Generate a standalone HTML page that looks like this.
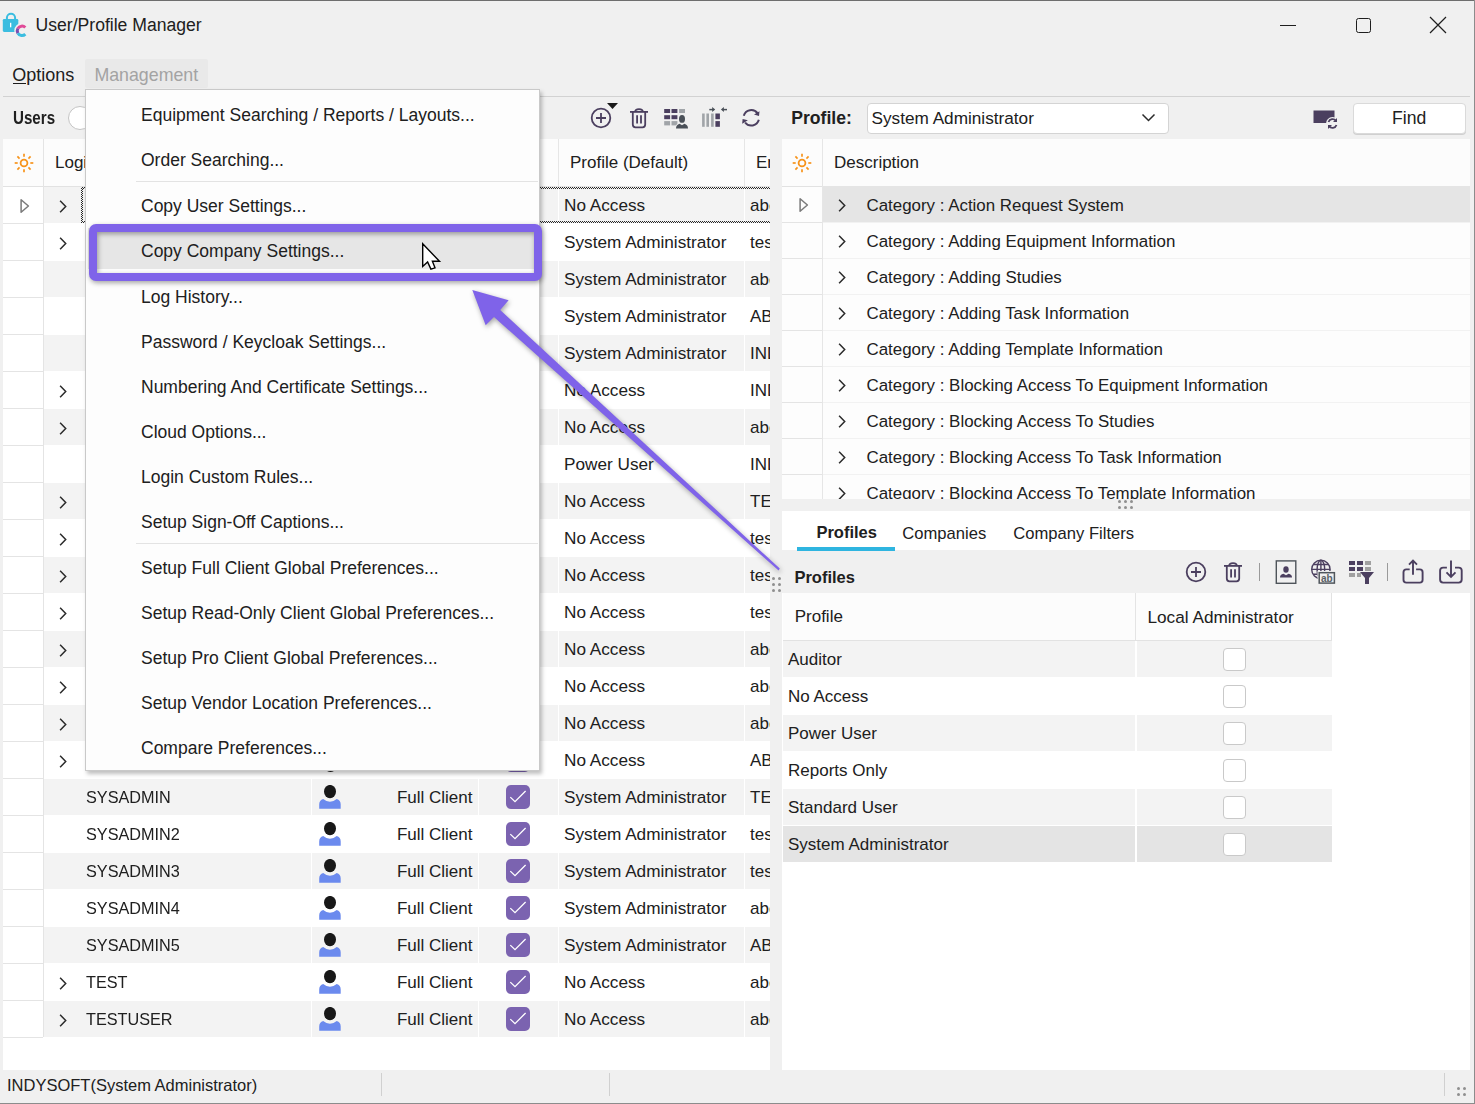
<!DOCTYPE html><html><head><meta charset="utf-8"><style>
*{box-sizing:border-box;margin:0;padding:0}
html,body{width:1475px;height:1104px;overflow:hidden;background:#f0f0f0;font-family:"Liberation Sans",sans-serif;color:#202020}
.a{position:absolute}
.t{position:absolute;white-space:nowrap}
.b{font-weight:bold}
</style></head><body><div class="a" style="left:0px;top:0px;width:1475px;height:1px;background:#6e6e6e"></div><div class="a" style="left:1474px;top:0px;width:1px;height:1104px;background:#8c8c8c"></div><div class="a" style="left:0px;top:1103px;width:1475px;height:1px;background:#8c8c8c"></div><svg class="a" style="left:0px;top:0px;" width="30" height="40" viewBox="0 0 30 40"><path d="M6.9 19.5 V17.8 A4.1 4.1 0 0 1 15.1 17.8 V19.5" fill="none" stroke="#3bbde0" stroke-width="2"/><rect x="2.8" y="19" width="15.5" height="12.9" rx="1.3" fill="#3bbde0"/><rect x="10" y="22.8" width="1.3" height="4.5" fill="#fff"/><path d="M25.3 27.5 A4.7 4.7 0 1 0 25.3 34.1" fill="none" stroke="#f0f0f0" stroke-width="6"/><path d="M25.3 27.5 A4.7 4.7 0 0 0 17.9 28.45" fill="none" stroke="#e04a98" stroke-width="3"/><path d="M17.9 28.45 A4.7 4.7 0 0 0 17.9 33.15" fill="none" stroke="#7a4db0" stroke-width="3"/><path d="M17.9 33.15 A4.7 4.7 0 0 0 25.3 34.1" fill="none" stroke="#3bbde0" stroke-width="3"/></svg><div class="t" style="left:35.5px;top:9.80px;font-size:17.60px;line-height:30px;">User/Profile Manager</div><div class="a" style="left:1280px;top:25px;width:16px;height:1.2px;background:#1e1e1e"></div><div class="a" style="left:1355.5px;top:17.5px;width:15px;height:15px;border:1.3px solid #1e1e1e;border-radius:2.5px"></div><svg class="a" style="left:1429px;top:16px;" width="18" height="18" viewBox="0 0 18 18"><path d="M1 1 L17 17 M17 1 L1 17" stroke="#1e1e1e" stroke-width="1.2"/></svg><div class="a" style="left:85px;top:59px;width:123px;height:29px;background:#e9e9e9;border-radius:2px"></div><div class="t" style="left:12.2px;top:60.36px;font-size:18.00px;line-height:30px;">Options</div><div class="a" style="left:12.5px;top:83.3px;width:13.5px;height:1.2px;background:#1c1c1c"></div><div class="t" style="left:94.4px;top:60.43px;font-size:17.80px;line-height:30px;color:#a3a3a3">Management</div><div class="a" style="left:3px;top:96px;width:1467px;height:1px;background:#d2d2d2"></div><div class="t" style="left:7.0px;top:1070.28px;font-size:16.50px;line-height:30px;">INDYSOFT(System Administrator)</div><div class="a" style="left:381px;top:1073px;width:1px;height:23px;background:#d0d0d0"></div><div class="a" style="left:609px;top:1073px;width:1px;height:23px;background:#d0d0d0"></div><div class="a" style="left:1444px;top:1073px;width:1px;height:23px;background:#d0d0d0"></div><div class="a" style="left:1457.0px;top:1087.0px;width:3px;height:3px;border-radius:50%;background:#8f8f8f"></div><div class="a" style="left:1457.0px;top:1093.0px;width:3px;height:3px;border-radius:50%;background:#8f8f8f"></div><div class="a" style="left:1463.0px;top:1087.0px;width:3px;height:3px;border-radius:50%;background:#8f8f8f"></div><div class="a" style="left:1463.0px;top:1093.0px;width:3px;height:3px;border-radius:50%;background:#8f8f8f"></div><div class="t" style="left:12.5px;top:102.80px;font-size:17.60px;line-height:30px;font-weight:bold;transform:scaleX(0.86);transform-origin:0 0">Users</div><div class="a" style="left:68px;top:106px;width:24px;height:24px;border-radius:50%;background:#fff;border:1.3px solid #c4c4c4"></div><svg class="a" style="left:589px;top:101px;" width="32" height="30" viewBox="0 0 32 30"><circle cx="12" cy="17" r="9.3" fill="none" stroke="#4b3f5f" stroke-width="1.8"/><path d="M12 12 V22 M7 17 H17" stroke="#4b3f5f" stroke-width="1.8"/><path d="M18 2 H29 L23.5 8 Z" fill="#1a1a1a"/></svg><svg class="a" style="left:629px;top:107px;" width="21" height="22" viewBox="0 0 21 22"><path d="M1 4.9 H19" stroke="#4b3f5f" stroke-width="1.8"/><path d="M6.2 4.9 Q6.2 2.2 10 2.2 Q13.8 2.2 13.8 4.9" fill="none" stroke="#4b3f5f" stroke-width="1.8"/><path d="M3.8 5 V17.6 Q3.8 20.3 6.5 20.3 H13.5 Q16.2 20.3 16.2 17.6 V5" fill="none" stroke="#4b3f5f" stroke-width="1.8"/><path d="M8.1 8.2 V16.5 M12 8.2 V16.5" stroke="#4b3f5f" stroke-width="1.8"/></svg><svg class="a" style="left:663px;top:107px;" width="26" height="23" viewBox="0 0 26 23"><rect x="1.2" y="2" width="5.9" height="4" fill="#4b3f5f"/><rect x="8.5" y="2" width="5.9" height="4" fill="#4b3f5f"/><rect x="16.1" y="2" width="5.9" height="4" fill="#a0a4a8"/><rect x="1.2" y="8.2" width="5.9" height="4" fill="#4b3f5f"/><rect x="8.5" y="8.2" width="5.9" height="4" fill="#4b3f5f"/><rect x="1.2" y="14.1" width="5.9" height="4.3" fill="#a0a4a8"/><rect x="8.5" y="14.1" width="5.9" height="4.3" fill="#a0a4a8"/><g stroke="#f0f0f0" stroke-width="1.6"><ellipse cx="19" cy="11.9" rx="3" ry="3.9" fill="#4a5058"/><path d="M13 21.5 Q13 17.6 16.6 16.7 L19 18.3 L21.4 16.7 Q25 17.6 25 21.5 Z" fill="#4a5058"/></g><ellipse cx="19" cy="11.9" rx="3" ry="3.9" fill="#4a5058"/><path d="M13 21.5 Q13 17.6 16.6 16.7 L19 18.3 L21.4 16.7 Q25 17.6 25 21.5 Z" fill="#4a5058"/></svg><svg class="a" style="left:701px;top:106px;" width="27" height="23" viewBox="0 0 27 23"><rect x="1.1" y="7.5" width="2.6" height="13.3" fill="#a0a4a8"/><rect x="5.4" y="7.5" width="2.6" height="13.3" fill="#a0a4a8"/><rect x="10.1" y="7.5" width="2.6" height="13.3" fill="#a0a4a8"/><rect x="14.4" y="7.5" width="4.5" height="5.7" fill="#4b3f5f"/><rect x="14.4" y="15.1" width="4.5" height="5.7" fill="#4b3f5f"/><path d="M8.3 3.6 H12.6" stroke="#4a5058" stroke-width="1.5"/><path d="M11.2 1.1 L14.2 3.6 L11.2 6.1 Z" fill="#4a5058"/><path d="M21.5 3.6 H26" stroke="#4a5058" stroke-width="1.5"/><path d="M22.9 1.1 L19.9 3.6 L22.9 6.1 Z" fill="#4a5058"/></svg><svg class="a" style="left:741px;top:107px;" width="21" height="21" viewBox="0 0 21 21"><path d="M2.77 8.78 A7.8 7.8 0 0 1 16.6 6.3" fill="none" stroke="#4b3f5f" stroke-width="2"/><path d="M18.5 4.2 L18 8.9 L13 7.4 Z" fill="#4b3f5f"/><path d="M17.83 12.82 A7.8 7.8 0 0 1 4.1 15.5" fill="none" stroke="#4b3f5f" stroke-width="2"/><path d="M1.2 16.7 L1.6 12 L6.9 13.3 Z" fill="#4b3f5f"/></svg><div class="t" style="left:791.2px;top:102.80px;font-size:17.60px;line-height:30px;font-weight:bold">Profile:</div><div class="a" style="left:867px;top:102.5px;width:302px;height:31px;background:#fff;border:1px solid #d4d4d4;border-radius:4px"></div><div class="t" style="left:871.5px;top:103.04px;font-size:17.20px;line-height:30px;">System Administrator</div><svg class="a" style="left:1141px;top:113px;" width="15" height="10" viewBox="0 0 15 10"><path d="M1.5 1.5 L7.5 7.5 L13.5 1.5" fill="none" stroke="#2a2a2a" stroke-width="1.5"/></svg><svg class="a" style="left:1313px;top:110px;" width="27" height="20" viewBox="0 0 27 20"><rect x="0.5" y="0.5" width="21" height="12.5" fill="#4b3f5f"/><circle cx="19.5" cy="13.5" r="6.5" fill="#f0f0f0"/><path d="M15.5 12 A4.2 4.2 0 0 1 23 11" fill="none" stroke="#4b3f5f" stroke-width="1.8"/><path d="M24 8 V12 H20 Z" fill="#4b3f5f"/><path d="M23.5 15 A4.2 4.2 0 0 1 16 16" fill="none" stroke="#4b3f5f" stroke-width="1.8"/><path d="M15 19 V15 H19 Z" fill="#4b3f5f"/></svg><div class="a" style="left:1352.5px;top:102.5px;width:113px;height:31px;background:#fff;border:1px solid #dadada;border-radius:4px;box-shadow:0 1px 0 #d0d0d0"></div><div class="t" style="left:1392.0px;top:103.40px;font-size:17.60px;line-height:30px;">Find</div><div class="a" style="left:3px;top:139px;width:767px;height:931px;background:#fff"></div><div class="a" style="left:3px;top:139px;width:767px;height:47px;background:#fcfcfc"></div><div class="a" style="left:3px;top:186px;width:767px;height:1px;background:#e2e2e2"></div><div class="a" style="left:43px;top:139px;width:1px;height:47px;background:#e6e6e6"></div><div class="a" style="left:558px;top:139px;width:1px;height:47px;background:#e6e6e6"></div><div class="a" style="left:744px;top:139px;width:1px;height:47px;background:#e6e6e6"></div><div class="a" style="left:311px;top:139px;width:1px;height:47px;background:#e6e6e6"></div><div class="a" style="left:478px;top:139px;width:1px;height:47px;background:#e6e6e6"></div><svg class="a" style="left:13.7px;top:152.6px;" width="20" height="20" viewBox="0 0 20 20"><g stroke="#f7931a" stroke-width="1.7"><line x1="16.30" y1="10.00" x2="19.30" y2="10.00"/><line x1="14.45" y1="14.45" x2="16.58" y2="16.58"/><line x1="10.00" y1="16.30" x2="10.00" y2="19.30"/><line x1="5.55" y1="14.45" x2="3.42" y2="16.58"/><line x1="3.70" y1="10.00" x2="0.70" y2="10.00"/><line x1="5.55" y1="5.55" x2="3.42" y2="3.42"/><line x1="10.00" y1="3.70" x2="10.00" y2="0.70"/><line x1="14.45" y1="5.55" x2="16.58" y2="3.42"/></g><circle cx="10" cy="10" r="3.4" fill="none" stroke="#f7931a" stroke-width="1.8"/></svg><div class="t" style="left:55.0px;top:148.11px;font-size:17.00px;line-height:30px;">Login</div><div class="t" style="left:570.0px;top:148.11px;font-size:17.00px;line-height:30px;">Profile (Default)</div><div class="a" style="left:744px;top:139px;width:26px;height:47px;overflow:hidden"><div class="t" style="left:12px;top:9.11px;font-size:17px;line-height:30px">Email</div></div><div class="a" style="left:43px;top:187px;width:727px;height:36px;background:#f3f3f3"></div><div class="a" style="left:311px;top:187px;width:1px;height:36px;background:#fff"></div><div class="a" style="left:478px;top:187px;width:1px;height:36px;background:#fff"></div><div class="a" style="left:558px;top:187px;width:1px;height:36px;background:#fff"></div><div class="a" style="left:744px;top:187px;width:1px;height:36px;background:#fff"></div><div class="a" style="left:3px;top:223px;width:40px;height:1px;background:#e4e4e4"></div><svg class="a" style="left:57.5px;top:199px;" width="11" height="15" viewBox="0 0 11 15"><path d="M2.1 1.8 L7.7 7.55 L2.1 13.3" fill="none" stroke="#2b2b2b" stroke-width="1.5"/></svg><div class="t" style="left:86.0px;top:190.81px;font-size:17.00px;line-height:30px;transform:scaleX(0.955);transform-origin:0 0">ADMIN1</div><svg class="a" style="left:319px;top:193px;" width="24" height="26" viewBox="0 0 24 26"><ellipse cx="11" cy="6.6" rx="6" ry="6.7" fill="#181818"/><path d="M0.2 23.8 V19.5 Q0.2 15 4.2 13.9 Q11 19.5 17.7 13.9 Q21.7 15 21.7 19.5 V23.8 Z" fill="#6b8aee"/></svg><div class="t" style="left:472.5px;top:190.81px;font-size:17.00px;line-height:30px;transform:translateX(-100%)">Full Client</div><div class="a" style="left:506px;top:193px;width:24px;height:24px;border-radius:5px;background:#7b63b0"></div><svg class="a" style="left:506px;top:193px;" width="24" height="24" viewBox="0 0 24 24"><path d="M4.3 12.1 L9 16.6 L19.6 6" fill="none" stroke="#fff" stroke-width="1.3"/></svg><div class="t" style="left:564.0px;top:190.24px;font-size:17.20px;line-height:30px;">No Access</div><div class="a" style="left:744px;top:186px;width:26px;height:37px;overflow:hidden"><div class="t" style="left:6px;top:4.81px;font-size:17px;line-height:30px">abc@indysoft.com</div></div><div class="a" style="left:3px;top:260px;width:40px;height:1px;background:#e4e4e4"></div><svg class="a" style="left:57.5px;top:236px;" width="11" height="15" viewBox="0 0 11 15"><path d="M2.1 1.8 L7.7 7.55 L2.1 13.3" fill="none" stroke="#2b2b2b" stroke-width="1.5"/></svg><div class="t" style="left:86.0px;top:227.81px;font-size:17.00px;line-height:30px;transform:scaleX(0.955);transform-origin:0 0">ADMIN2</div><svg class="a" style="left:319px;top:230px;" width="24" height="26" viewBox="0 0 24 26"><ellipse cx="11" cy="6.6" rx="6" ry="6.7" fill="#181818"/><path d="M0.2 23.8 V19.5 Q0.2 15 4.2 13.9 Q11 19.5 17.7 13.9 Q21.7 15 21.7 19.5 V23.8 Z" fill="#6b8aee"/></svg><div class="t" style="left:472.5px;top:227.81px;font-size:17.00px;line-height:30px;transform:translateX(-100%)">Full Client</div><div class="a" style="left:506px;top:230px;width:24px;height:24px;border-radius:5px;background:#7b63b0"></div><svg class="a" style="left:506px;top:230px;" width="24" height="24" viewBox="0 0 24 24"><path d="M4.3 12.1 L9 16.6 L19.6 6" fill="none" stroke="#fff" stroke-width="1.3"/></svg><div class="t" style="left:564.0px;top:227.24px;font-size:17.20px;line-height:30px;">System Administrator</div><div class="a" style="left:744px;top:223px;width:26px;height:37px;overflow:hidden"><div class="t" style="left:6px;top:4.81px;font-size:17px;line-height:30px">test@indysoft.com</div></div><div class="a" style="left:43px;top:261px;width:727px;height:36px;background:#f3f3f3"></div><div class="a" style="left:311px;top:261px;width:1px;height:36px;background:#fff"></div><div class="a" style="left:478px;top:261px;width:1px;height:36px;background:#fff"></div><div class="a" style="left:558px;top:261px;width:1px;height:36px;background:#fff"></div><div class="a" style="left:744px;top:261px;width:1px;height:36px;background:#fff"></div><div class="a" style="left:3px;top:297px;width:40px;height:1px;background:#e4e4e4"></div><div class="t" style="left:86.0px;top:264.81px;font-size:17.00px;line-height:30px;transform:scaleX(0.955);transform-origin:0 0">ADMIN3</div><svg class="a" style="left:319px;top:267px;" width="24" height="26" viewBox="0 0 24 26"><ellipse cx="11" cy="6.6" rx="6" ry="6.7" fill="#181818"/><path d="M0.2 23.8 V19.5 Q0.2 15 4.2 13.9 Q11 19.5 17.7 13.9 Q21.7 15 21.7 19.5 V23.8 Z" fill="#6b8aee"/></svg><div class="t" style="left:472.5px;top:264.81px;font-size:17.00px;line-height:30px;transform:translateX(-100%)">Full Client</div><div class="a" style="left:506px;top:267px;width:24px;height:24px;border-radius:5px;background:#7b63b0"></div><svg class="a" style="left:506px;top:267px;" width="24" height="24" viewBox="0 0 24 24"><path d="M4.3 12.1 L9 16.6 L19.6 6" fill="none" stroke="#fff" stroke-width="1.3"/></svg><div class="t" style="left:564.0px;top:264.24px;font-size:17.20px;line-height:30px;">System Administrator</div><div class="a" style="left:744px;top:260px;width:26px;height:37px;overflow:hidden"><div class="t" style="left:6px;top:4.81px;font-size:17px;line-height:30px">abc@indysoft.com</div></div><div class="a" style="left:3px;top:334px;width:40px;height:1px;background:#e4e4e4"></div><div class="t" style="left:86.0px;top:301.81px;font-size:17.00px;line-height:30px;transform:scaleX(0.955);transform-origin:0 0">ADMIN4</div><svg class="a" style="left:319px;top:304px;" width="24" height="26" viewBox="0 0 24 26"><ellipse cx="11" cy="6.6" rx="6" ry="6.7" fill="#181818"/><path d="M0.2 23.8 V19.5 Q0.2 15 4.2 13.9 Q11 19.5 17.7 13.9 Q21.7 15 21.7 19.5 V23.8 Z" fill="#6b8aee"/></svg><div class="t" style="left:472.5px;top:301.81px;font-size:17.00px;line-height:30px;transform:translateX(-100%)">Full Client</div><div class="a" style="left:506px;top:304px;width:24px;height:24px;border-radius:5px;background:#7b63b0"></div><svg class="a" style="left:506px;top:304px;" width="24" height="24" viewBox="0 0 24 24"><path d="M4.3 12.1 L9 16.6 L19.6 6" fill="none" stroke="#fff" stroke-width="1.3"/></svg><div class="t" style="left:564.0px;top:301.24px;font-size:17.20px;line-height:30px;">System Administrator</div><div class="a" style="left:744px;top:297px;width:26px;height:37px;overflow:hidden"><div class="t" style="left:6px;top:4.81px;font-size:17px;line-height:30px">ABC@indysoft.com</div></div><div class="a" style="left:43px;top:335px;width:727px;height:36px;background:#f3f3f3"></div><div class="a" style="left:311px;top:335px;width:1px;height:36px;background:#fff"></div><div class="a" style="left:478px;top:335px;width:1px;height:36px;background:#fff"></div><div class="a" style="left:558px;top:335px;width:1px;height:36px;background:#fff"></div><div class="a" style="left:744px;top:335px;width:1px;height:36px;background:#fff"></div><div class="a" style="left:3px;top:371px;width:40px;height:1px;background:#e4e4e4"></div><div class="t" style="left:86.0px;top:338.81px;font-size:17.00px;line-height:30px;transform:scaleX(0.955);transform-origin:0 0">ADMIN5</div><svg class="a" style="left:319px;top:341px;" width="24" height="26" viewBox="0 0 24 26"><ellipse cx="11" cy="6.6" rx="6" ry="6.7" fill="#181818"/><path d="M0.2 23.8 V19.5 Q0.2 15 4.2 13.9 Q11 19.5 17.7 13.9 Q21.7 15 21.7 19.5 V23.8 Z" fill="#6b8aee"/></svg><div class="t" style="left:472.5px;top:338.81px;font-size:17.00px;line-height:30px;transform:translateX(-100%)">Full Client</div><div class="a" style="left:506px;top:341px;width:24px;height:24px;border-radius:5px;background:#7b63b0"></div><svg class="a" style="left:506px;top:341px;" width="24" height="24" viewBox="0 0 24 24"><path d="M4.3 12.1 L9 16.6 L19.6 6" fill="none" stroke="#fff" stroke-width="1.3"/></svg><div class="t" style="left:564.0px;top:338.24px;font-size:17.20px;line-height:30px;">System Administrator</div><div class="a" style="left:744px;top:334px;width:26px;height:37px;overflow:hidden"><div class="t" style="left:6px;top:4.81px;font-size:17px;line-height:30px">INDY@indysoft.com</div></div><div class="a" style="left:3px;top:408px;width:40px;height:1px;background:#e4e4e4"></div><svg class="a" style="left:57.5px;top:384px;" width="11" height="15" viewBox="0 0 11 15"><path d="M2.1 1.8 L7.7 7.55 L2.1 13.3" fill="none" stroke="#2b2b2b" stroke-width="1.5"/></svg><div class="t" style="left:86.0px;top:375.81px;font-size:17.00px;line-height:30px;transform:scaleX(0.955);transform-origin:0 0">USER1</div><svg class="a" style="left:319px;top:378px;" width="24" height="26" viewBox="0 0 24 26"><ellipse cx="11" cy="6.6" rx="6" ry="6.7" fill="#181818"/><path d="M0.2 23.8 V19.5 Q0.2 15 4.2 13.9 Q11 19.5 17.7 13.9 Q21.7 15 21.7 19.5 V23.8 Z" fill="#6b8aee"/></svg><div class="t" style="left:472.5px;top:375.81px;font-size:17.00px;line-height:30px;transform:translateX(-100%)">Full Client</div><div class="a" style="left:506px;top:378px;width:24px;height:24px;border-radius:5px;background:#7b63b0"></div><svg class="a" style="left:506px;top:378px;" width="24" height="24" viewBox="0 0 24 24"><path d="M4.3 12.1 L9 16.6 L19.6 6" fill="none" stroke="#fff" stroke-width="1.3"/></svg><div class="t" style="left:564.0px;top:375.24px;font-size:17.20px;line-height:30px;">No Access</div><div class="a" style="left:744px;top:371px;width:26px;height:37px;overflow:hidden"><div class="t" style="left:6px;top:4.81px;font-size:17px;line-height:30px">INDY@indysoft.com</div></div><div class="a" style="left:43px;top:409px;width:727px;height:36px;background:#f3f3f3"></div><div class="a" style="left:311px;top:409px;width:1px;height:36px;background:#fff"></div><div class="a" style="left:478px;top:409px;width:1px;height:36px;background:#fff"></div><div class="a" style="left:558px;top:409px;width:1px;height:36px;background:#fff"></div><div class="a" style="left:744px;top:409px;width:1px;height:36px;background:#fff"></div><div class="a" style="left:3px;top:445px;width:40px;height:1px;background:#e4e4e4"></div><svg class="a" style="left:57.5px;top:421px;" width="11" height="15" viewBox="0 0 11 15"><path d="M2.1 1.8 L7.7 7.55 L2.1 13.3" fill="none" stroke="#2b2b2b" stroke-width="1.5"/></svg><div class="t" style="left:86.0px;top:412.81px;font-size:17.00px;line-height:30px;transform:scaleX(0.955);transform-origin:0 0">USER2</div><svg class="a" style="left:319px;top:415px;" width="24" height="26" viewBox="0 0 24 26"><ellipse cx="11" cy="6.6" rx="6" ry="6.7" fill="#181818"/><path d="M0.2 23.8 V19.5 Q0.2 15 4.2 13.9 Q11 19.5 17.7 13.9 Q21.7 15 21.7 19.5 V23.8 Z" fill="#6b8aee"/></svg><div class="t" style="left:472.5px;top:412.81px;font-size:17.00px;line-height:30px;transform:translateX(-100%)">Full Client</div><div class="a" style="left:506px;top:415px;width:24px;height:24px;border-radius:5px;background:#7b63b0"></div><svg class="a" style="left:506px;top:415px;" width="24" height="24" viewBox="0 0 24 24"><path d="M4.3 12.1 L9 16.6 L19.6 6" fill="none" stroke="#fff" stroke-width="1.3"/></svg><div class="t" style="left:564.0px;top:412.24px;font-size:17.20px;line-height:30px;">No Access</div><div class="a" style="left:744px;top:408px;width:26px;height:37px;overflow:hidden"><div class="t" style="left:6px;top:4.81px;font-size:17px;line-height:30px">abc@indysoft.com</div></div><div class="a" style="left:3px;top:482px;width:40px;height:1px;background:#e4e4e4"></div><div class="t" style="left:86.0px;top:449.81px;font-size:17.00px;line-height:30px;transform:scaleX(0.955);transform-origin:0 0">POWER</div><svg class="a" style="left:319px;top:452px;" width="24" height="26" viewBox="0 0 24 26"><ellipse cx="11" cy="6.6" rx="6" ry="6.7" fill="#181818"/><path d="M0.2 23.8 V19.5 Q0.2 15 4.2 13.9 Q11 19.5 17.7 13.9 Q21.7 15 21.7 19.5 V23.8 Z" fill="#6b8aee"/></svg><div class="t" style="left:472.5px;top:449.81px;font-size:17.00px;line-height:30px;transform:translateX(-100%)">Full Client</div><div class="a" style="left:506px;top:452px;width:24px;height:24px;border-radius:5px;background:#7b63b0"></div><svg class="a" style="left:506px;top:452px;" width="24" height="24" viewBox="0 0 24 24"><path d="M4.3 12.1 L9 16.6 L19.6 6" fill="none" stroke="#fff" stroke-width="1.3"/></svg><div class="t" style="left:564.0px;top:449.24px;font-size:17.20px;line-height:30px;">Power User</div><div class="a" style="left:744px;top:445px;width:26px;height:37px;overflow:hidden"><div class="t" style="left:6px;top:4.81px;font-size:17px;line-height:30px">INDY@indysoft.com</div></div><div class="a" style="left:43px;top:483px;width:727px;height:36px;background:#f3f3f3"></div><div class="a" style="left:311px;top:483px;width:1px;height:36px;background:#fff"></div><div class="a" style="left:478px;top:483px;width:1px;height:36px;background:#fff"></div><div class="a" style="left:558px;top:483px;width:1px;height:36px;background:#fff"></div><div class="a" style="left:744px;top:483px;width:1px;height:36px;background:#fff"></div><div class="a" style="left:3px;top:519px;width:40px;height:1px;background:#e4e4e4"></div><svg class="a" style="left:57.5px;top:495px;" width="11" height="15" viewBox="0 0 11 15"><path d="M2.1 1.8 L7.7 7.55 L2.1 13.3" fill="none" stroke="#2b2b2b" stroke-width="1.5"/></svg><div class="t" style="left:86.0px;top:486.81px;font-size:17.00px;line-height:30px;transform:scaleX(0.955);transform-origin:0 0">USER3</div><svg class="a" style="left:319px;top:489px;" width="24" height="26" viewBox="0 0 24 26"><ellipse cx="11" cy="6.6" rx="6" ry="6.7" fill="#181818"/><path d="M0.2 23.8 V19.5 Q0.2 15 4.2 13.9 Q11 19.5 17.7 13.9 Q21.7 15 21.7 19.5 V23.8 Z" fill="#6b8aee"/></svg><div class="t" style="left:472.5px;top:486.81px;font-size:17.00px;line-height:30px;transform:translateX(-100%)">Full Client</div><div class="a" style="left:506px;top:489px;width:24px;height:24px;border-radius:5px;background:#7b63b0"></div><svg class="a" style="left:506px;top:489px;" width="24" height="24" viewBox="0 0 24 24"><path d="M4.3 12.1 L9 16.6 L19.6 6" fill="none" stroke="#fff" stroke-width="1.3"/></svg><div class="t" style="left:564.0px;top:486.24px;font-size:17.20px;line-height:30px;">No Access</div><div class="a" style="left:744px;top:482px;width:26px;height:37px;overflow:hidden"><div class="t" style="left:6px;top:4.81px;font-size:17px;line-height:30px">TEST@indysoft.com</div></div><div class="a" style="left:3px;top:556px;width:40px;height:1px;background:#e4e4e4"></div><svg class="a" style="left:57.5px;top:532px;" width="11" height="15" viewBox="0 0 11 15"><path d="M2.1 1.8 L7.7 7.55 L2.1 13.3" fill="none" stroke="#2b2b2b" stroke-width="1.5"/></svg><div class="t" style="left:86.0px;top:523.81px;font-size:17.00px;line-height:30px;transform:scaleX(0.955);transform-origin:0 0">USER4</div><svg class="a" style="left:319px;top:526px;" width="24" height="26" viewBox="0 0 24 26"><ellipse cx="11" cy="6.6" rx="6" ry="6.7" fill="#181818"/><path d="M0.2 23.8 V19.5 Q0.2 15 4.2 13.9 Q11 19.5 17.7 13.9 Q21.7 15 21.7 19.5 V23.8 Z" fill="#6b8aee"/></svg><div class="t" style="left:472.5px;top:523.81px;font-size:17.00px;line-height:30px;transform:translateX(-100%)">Full Client</div><div class="a" style="left:506px;top:526px;width:24px;height:24px;border-radius:5px;background:#7b63b0"></div><svg class="a" style="left:506px;top:526px;" width="24" height="24" viewBox="0 0 24 24"><path d="M4.3 12.1 L9 16.6 L19.6 6" fill="none" stroke="#fff" stroke-width="1.3"/></svg><div class="t" style="left:564.0px;top:523.24px;font-size:17.20px;line-height:30px;">No Access</div><div class="a" style="left:744px;top:519px;width:26px;height:37px;overflow:hidden"><div class="t" style="left:6px;top:4.81px;font-size:17px;line-height:30px">test@indysoft.com</div></div><div class="a" style="left:43px;top:557px;width:727px;height:36px;background:#f3f3f3"></div><div class="a" style="left:311px;top:557px;width:1px;height:36px;background:#fff"></div><div class="a" style="left:478px;top:557px;width:1px;height:36px;background:#fff"></div><div class="a" style="left:558px;top:557px;width:1px;height:36px;background:#fff"></div><div class="a" style="left:744px;top:557px;width:1px;height:36px;background:#fff"></div><div class="a" style="left:3px;top:593px;width:40px;height:1px;background:#e4e4e4"></div><svg class="a" style="left:57.5px;top:569px;" width="11" height="15" viewBox="0 0 11 15"><path d="M2.1 1.8 L7.7 7.55 L2.1 13.3" fill="none" stroke="#2b2b2b" stroke-width="1.5"/></svg><div class="t" style="left:86.0px;top:560.81px;font-size:17.00px;line-height:30px;transform:scaleX(0.955);transform-origin:0 0">USER5</div><svg class="a" style="left:319px;top:563px;" width="24" height="26" viewBox="0 0 24 26"><ellipse cx="11" cy="6.6" rx="6" ry="6.7" fill="#181818"/><path d="M0.2 23.8 V19.5 Q0.2 15 4.2 13.9 Q11 19.5 17.7 13.9 Q21.7 15 21.7 19.5 V23.8 Z" fill="#6b8aee"/></svg><div class="t" style="left:472.5px;top:560.81px;font-size:17.00px;line-height:30px;transform:translateX(-100%)">Full Client</div><div class="a" style="left:506px;top:563px;width:24px;height:24px;border-radius:5px;background:#7b63b0"></div><svg class="a" style="left:506px;top:563px;" width="24" height="24" viewBox="0 0 24 24"><path d="M4.3 12.1 L9 16.6 L19.6 6" fill="none" stroke="#fff" stroke-width="1.3"/></svg><div class="t" style="left:564.0px;top:560.24px;font-size:17.20px;line-height:30px;">No Access</div><div class="a" style="left:744px;top:556px;width:26px;height:37px;overflow:hidden"><div class="t" style="left:6px;top:4.81px;font-size:17px;line-height:30px">test@indysoft.com</div></div><div class="a" style="left:3px;top:630px;width:40px;height:1px;background:#e4e4e4"></div><svg class="a" style="left:57.5px;top:606px;" width="11" height="15" viewBox="0 0 11 15"><path d="M2.1 1.8 L7.7 7.55 L2.1 13.3" fill="none" stroke="#2b2b2b" stroke-width="1.5"/></svg><div class="t" style="left:86.0px;top:597.81px;font-size:17.00px;line-height:30px;transform:scaleX(0.955);transform-origin:0 0">USER6</div><svg class="a" style="left:319px;top:600px;" width="24" height="26" viewBox="0 0 24 26"><ellipse cx="11" cy="6.6" rx="6" ry="6.7" fill="#181818"/><path d="M0.2 23.8 V19.5 Q0.2 15 4.2 13.9 Q11 19.5 17.7 13.9 Q21.7 15 21.7 19.5 V23.8 Z" fill="#6b8aee"/></svg><div class="t" style="left:472.5px;top:597.81px;font-size:17.00px;line-height:30px;transform:translateX(-100%)">Full Client</div><div class="a" style="left:506px;top:600px;width:24px;height:24px;border-radius:5px;background:#7b63b0"></div><svg class="a" style="left:506px;top:600px;" width="24" height="24" viewBox="0 0 24 24"><path d="M4.3 12.1 L9 16.6 L19.6 6" fill="none" stroke="#fff" stroke-width="1.3"/></svg><div class="t" style="left:564.0px;top:597.24px;font-size:17.20px;line-height:30px;">No Access</div><div class="a" style="left:744px;top:593px;width:26px;height:37px;overflow:hidden"><div class="t" style="left:6px;top:4.81px;font-size:17px;line-height:30px">test@indysoft.com</div></div><div class="a" style="left:43px;top:631px;width:727px;height:36px;background:#f3f3f3"></div><div class="a" style="left:311px;top:631px;width:1px;height:36px;background:#fff"></div><div class="a" style="left:478px;top:631px;width:1px;height:36px;background:#fff"></div><div class="a" style="left:558px;top:631px;width:1px;height:36px;background:#fff"></div><div class="a" style="left:744px;top:631px;width:1px;height:36px;background:#fff"></div><div class="a" style="left:3px;top:667px;width:40px;height:1px;background:#e4e4e4"></div><svg class="a" style="left:57.5px;top:643px;" width="11" height="15" viewBox="0 0 11 15"><path d="M2.1 1.8 L7.7 7.55 L2.1 13.3" fill="none" stroke="#2b2b2b" stroke-width="1.5"/></svg><div class="t" style="left:86.0px;top:634.81px;font-size:17.00px;line-height:30px;transform:scaleX(0.955);transform-origin:0 0">USER7</div><svg class="a" style="left:319px;top:637px;" width="24" height="26" viewBox="0 0 24 26"><ellipse cx="11" cy="6.6" rx="6" ry="6.7" fill="#181818"/><path d="M0.2 23.8 V19.5 Q0.2 15 4.2 13.9 Q11 19.5 17.7 13.9 Q21.7 15 21.7 19.5 V23.8 Z" fill="#6b8aee"/></svg><div class="t" style="left:472.5px;top:634.81px;font-size:17.00px;line-height:30px;transform:translateX(-100%)">Full Client</div><div class="a" style="left:506px;top:637px;width:24px;height:24px;border-radius:5px;background:#7b63b0"></div><svg class="a" style="left:506px;top:637px;" width="24" height="24" viewBox="0 0 24 24"><path d="M4.3 12.1 L9 16.6 L19.6 6" fill="none" stroke="#fff" stroke-width="1.3"/></svg><div class="t" style="left:564.0px;top:634.24px;font-size:17.20px;line-height:30px;">No Access</div><div class="a" style="left:744px;top:630px;width:26px;height:37px;overflow:hidden"><div class="t" style="left:6px;top:4.81px;font-size:17px;line-height:30px">abc@indysoft.com</div></div><div class="a" style="left:3px;top:704px;width:40px;height:1px;background:#e4e4e4"></div><svg class="a" style="left:57.5px;top:680px;" width="11" height="15" viewBox="0 0 11 15"><path d="M2.1 1.8 L7.7 7.55 L2.1 13.3" fill="none" stroke="#2b2b2b" stroke-width="1.5"/></svg><div class="t" style="left:86.0px;top:671.81px;font-size:17.00px;line-height:30px;transform:scaleX(0.955);transform-origin:0 0">USER8</div><svg class="a" style="left:319px;top:674px;" width="24" height="26" viewBox="0 0 24 26"><ellipse cx="11" cy="6.6" rx="6" ry="6.7" fill="#181818"/><path d="M0.2 23.8 V19.5 Q0.2 15 4.2 13.9 Q11 19.5 17.7 13.9 Q21.7 15 21.7 19.5 V23.8 Z" fill="#6b8aee"/></svg><div class="t" style="left:472.5px;top:671.81px;font-size:17.00px;line-height:30px;transform:translateX(-100%)">Full Client</div><div class="a" style="left:506px;top:674px;width:24px;height:24px;border-radius:5px;background:#7b63b0"></div><svg class="a" style="left:506px;top:674px;" width="24" height="24" viewBox="0 0 24 24"><path d="M4.3 12.1 L9 16.6 L19.6 6" fill="none" stroke="#fff" stroke-width="1.3"/></svg><div class="t" style="left:564.0px;top:671.24px;font-size:17.20px;line-height:30px;">No Access</div><div class="a" style="left:744px;top:667px;width:26px;height:37px;overflow:hidden"><div class="t" style="left:6px;top:4.81px;font-size:17px;line-height:30px">abc@indysoft.com</div></div><div class="a" style="left:43px;top:705px;width:727px;height:36px;background:#f3f3f3"></div><div class="a" style="left:311px;top:705px;width:1px;height:36px;background:#fff"></div><div class="a" style="left:478px;top:705px;width:1px;height:36px;background:#fff"></div><div class="a" style="left:558px;top:705px;width:1px;height:36px;background:#fff"></div><div class="a" style="left:744px;top:705px;width:1px;height:36px;background:#fff"></div><div class="a" style="left:3px;top:741px;width:40px;height:1px;background:#e4e4e4"></div><svg class="a" style="left:57.5px;top:717px;" width="11" height="15" viewBox="0 0 11 15"><path d="M2.1 1.8 L7.7 7.55 L2.1 13.3" fill="none" stroke="#2b2b2b" stroke-width="1.5"/></svg><div class="t" style="left:86.0px;top:708.81px;font-size:17.00px;line-height:30px;transform:scaleX(0.955);transform-origin:0 0">USER9</div><svg class="a" style="left:319px;top:711px;" width="24" height="26" viewBox="0 0 24 26"><ellipse cx="11" cy="6.6" rx="6" ry="6.7" fill="#181818"/><path d="M0.2 23.8 V19.5 Q0.2 15 4.2 13.9 Q11 19.5 17.7 13.9 Q21.7 15 21.7 19.5 V23.8 Z" fill="#6b8aee"/></svg><div class="t" style="left:472.5px;top:708.81px;font-size:17.00px;line-height:30px;transform:translateX(-100%)">Full Client</div><div class="a" style="left:506px;top:711px;width:24px;height:24px;border-radius:5px;background:#7b63b0"></div><svg class="a" style="left:506px;top:711px;" width="24" height="24" viewBox="0 0 24 24"><path d="M4.3 12.1 L9 16.6 L19.6 6" fill="none" stroke="#fff" stroke-width="1.3"/></svg><div class="t" style="left:564.0px;top:708.24px;font-size:17.20px;line-height:30px;">No Access</div><div class="a" style="left:744px;top:704px;width:26px;height:37px;overflow:hidden"><div class="t" style="left:6px;top:4.81px;font-size:17px;line-height:30px">abc@indysoft.com</div></div><div class="a" style="left:3px;top:778px;width:40px;height:1px;background:#e4e4e4"></div><svg class="a" style="left:57.5px;top:754px;" width="11" height="15" viewBox="0 0 11 15"><path d="M2.1 1.8 L7.7 7.55 L2.1 13.3" fill="none" stroke="#2b2b2b" stroke-width="1.5"/></svg><div class="t" style="left:86.0px;top:745.81px;font-size:17.00px;line-height:30px;transform:scaleX(0.955);transform-origin:0 0">USER10</div><div class="a" style="left:324px;top:759px;width:13px;height:13px;border-radius:50%;background:#151515"></div><div class="t" style="left:472.5px;top:745.81px;font-size:17.00px;line-height:30px;transform:translateX(-100%)">Full Client</div><div class="a" style="left:506px;top:748px;width:24px;height:24px;border-radius:5px;background:#7b63b0"></div><svg class="a" style="left:506px;top:748px;" width="24" height="24" viewBox="0 0 24 24"><path d="M4.3 12.1 L9 16.6 L19.6 6" fill="none" stroke="#fff" stroke-width="1.3"/></svg><div class="t" style="left:564.0px;top:745.24px;font-size:17.20px;line-height:30px;">No Access</div><div class="a" style="left:744px;top:741px;width:26px;height:37px;overflow:hidden"><div class="t" style="left:6px;top:4.81px;font-size:17px;line-height:30px">ABC@indysoft.com</div></div><div class="a" style="left:43px;top:779px;width:727px;height:36px;background:#f3f3f3"></div><div class="a" style="left:311px;top:779px;width:1px;height:36px;background:#fff"></div><div class="a" style="left:478px;top:779px;width:1px;height:36px;background:#fff"></div><div class="a" style="left:558px;top:779px;width:1px;height:36px;background:#fff"></div><div class="a" style="left:744px;top:779px;width:1px;height:36px;background:#fff"></div><div class="a" style="left:3px;top:815px;width:40px;height:1px;background:#e4e4e4"></div><div class="t" style="left:86.0px;top:782.81px;font-size:17.00px;line-height:30px;transform:scaleX(0.955);transform-origin:0 0">SYSADMIN</div><svg class="a" style="left:319px;top:785px;" width="24" height="26" viewBox="0 0 24 26"><ellipse cx="11" cy="6.6" rx="6" ry="6.7" fill="#181818"/><path d="M0.2 23.8 V19.5 Q0.2 15 4.2 13.9 Q11 19.5 17.7 13.9 Q21.7 15 21.7 19.5 V23.8 Z" fill="#6b8aee"/></svg><div class="t" style="left:472.5px;top:782.81px;font-size:17.00px;line-height:30px;transform:translateX(-100%)">Full Client</div><div class="a" style="left:506px;top:785px;width:24px;height:24px;border-radius:5px;background:#7b63b0"></div><svg class="a" style="left:506px;top:785px;" width="24" height="24" viewBox="0 0 24 24"><path d="M4.3 12.1 L9 16.6 L19.6 6" fill="none" stroke="#fff" stroke-width="1.3"/></svg><div class="t" style="left:564.0px;top:782.24px;font-size:17.20px;line-height:30px;">System Administrator</div><div class="a" style="left:744px;top:778px;width:26px;height:37px;overflow:hidden"><div class="t" style="left:6px;top:4.81px;font-size:17px;line-height:30px">TEST@indysoft.com</div></div><div class="a" style="left:3px;top:852px;width:40px;height:1px;background:#e4e4e4"></div><div class="t" style="left:86.0px;top:819.81px;font-size:17.00px;line-height:30px;transform:scaleX(0.955);transform-origin:0 0">SYSADMIN2</div><svg class="a" style="left:319px;top:822px;" width="24" height="26" viewBox="0 0 24 26"><ellipse cx="11" cy="6.6" rx="6" ry="6.7" fill="#181818"/><path d="M0.2 23.8 V19.5 Q0.2 15 4.2 13.9 Q11 19.5 17.7 13.9 Q21.7 15 21.7 19.5 V23.8 Z" fill="#6b8aee"/></svg><div class="t" style="left:472.5px;top:819.81px;font-size:17.00px;line-height:30px;transform:translateX(-100%)">Full Client</div><div class="a" style="left:506px;top:822px;width:24px;height:24px;border-radius:5px;background:#7b63b0"></div><svg class="a" style="left:506px;top:822px;" width="24" height="24" viewBox="0 0 24 24"><path d="M4.3 12.1 L9 16.6 L19.6 6" fill="none" stroke="#fff" stroke-width="1.3"/></svg><div class="t" style="left:564.0px;top:819.24px;font-size:17.20px;line-height:30px;">System Administrator</div><div class="a" style="left:744px;top:815px;width:26px;height:37px;overflow:hidden"><div class="t" style="left:6px;top:4.81px;font-size:17px;line-height:30px">test@indysoft.com</div></div><div class="a" style="left:43px;top:853px;width:727px;height:36px;background:#f3f3f3"></div><div class="a" style="left:311px;top:853px;width:1px;height:36px;background:#fff"></div><div class="a" style="left:478px;top:853px;width:1px;height:36px;background:#fff"></div><div class="a" style="left:558px;top:853px;width:1px;height:36px;background:#fff"></div><div class="a" style="left:744px;top:853px;width:1px;height:36px;background:#fff"></div><div class="a" style="left:3px;top:889px;width:40px;height:1px;background:#e4e4e4"></div><div class="t" style="left:86.0px;top:856.81px;font-size:17.00px;line-height:30px;transform:scaleX(0.955);transform-origin:0 0">SYSADMIN3</div><svg class="a" style="left:319px;top:859px;" width="24" height="26" viewBox="0 0 24 26"><ellipse cx="11" cy="6.6" rx="6" ry="6.7" fill="#181818"/><path d="M0.2 23.8 V19.5 Q0.2 15 4.2 13.9 Q11 19.5 17.7 13.9 Q21.7 15 21.7 19.5 V23.8 Z" fill="#6b8aee"/></svg><div class="t" style="left:472.5px;top:856.81px;font-size:17.00px;line-height:30px;transform:translateX(-100%)">Full Client</div><div class="a" style="left:506px;top:859px;width:24px;height:24px;border-radius:5px;background:#7b63b0"></div><svg class="a" style="left:506px;top:859px;" width="24" height="24" viewBox="0 0 24 24"><path d="M4.3 12.1 L9 16.6 L19.6 6" fill="none" stroke="#fff" stroke-width="1.3"/></svg><div class="t" style="left:564.0px;top:856.24px;font-size:17.20px;line-height:30px;">System Administrator</div><div class="a" style="left:744px;top:852px;width:26px;height:37px;overflow:hidden"><div class="t" style="left:6px;top:4.81px;font-size:17px;line-height:30px">test@indysoft.com</div></div><div class="a" style="left:3px;top:926px;width:40px;height:1px;background:#e4e4e4"></div><div class="t" style="left:86.0px;top:893.81px;font-size:17.00px;line-height:30px;transform:scaleX(0.955);transform-origin:0 0">SYSADMIN4</div><svg class="a" style="left:319px;top:896px;" width="24" height="26" viewBox="0 0 24 26"><ellipse cx="11" cy="6.6" rx="6" ry="6.7" fill="#181818"/><path d="M0.2 23.8 V19.5 Q0.2 15 4.2 13.9 Q11 19.5 17.7 13.9 Q21.7 15 21.7 19.5 V23.8 Z" fill="#6b8aee"/></svg><div class="t" style="left:472.5px;top:893.81px;font-size:17.00px;line-height:30px;transform:translateX(-100%)">Full Client</div><div class="a" style="left:506px;top:896px;width:24px;height:24px;border-radius:5px;background:#7b63b0"></div><svg class="a" style="left:506px;top:896px;" width="24" height="24" viewBox="0 0 24 24"><path d="M4.3 12.1 L9 16.6 L19.6 6" fill="none" stroke="#fff" stroke-width="1.3"/></svg><div class="t" style="left:564.0px;top:893.24px;font-size:17.20px;line-height:30px;">System Administrator</div><div class="a" style="left:744px;top:889px;width:26px;height:37px;overflow:hidden"><div class="t" style="left:6px;top:4.81px;font-size:17px;line-height:30px">abc@indysoft.com</div></div><div class="a" style="left:43px;top:927px;width:727px;height:36px;background:#f3f3f3"></div><div class="a" style="left:311px;top:927px;width:1px;height:36px;background:#fff"></div><div class="a" style="left:478px;top:927px;width:1px;height:36px;background:#fff"></div><div class="a" style="left:558px;top:927px;width:1px;height:36px;background:#fff"></div><div class="a" style="left:744px;top:927px;width:1px;height:36px;background:#fff"></div><div class="a" style="left:3px;top:963px;width:40px;height:1px;background:#e4e4e4"></div><div class="t" style="left:86.0px;top:930.81px;font-size:17.00px;line-height:30px;transform:scaleX(0.955);transform-origin:0 0">SYSADMIN5</div><svg class="a" style="left:319px;top:933px;" width="24" height="26" viewBox="0 0 24 26"><ellipse cx="11" cy="6.6" rx="6" ry="6.7" fill="#181818"/><path d="M0.2 23.8 V19.5 Q0.2 15 4.2 13.9 Q11 19.5 17.7 13.9 Q21.7 15 21.7 19.5 V23.8 Z" fill="#6b8aee"/></svg><div class="t" style="left:472.5px;top:930.81px;font-size:17.00px;line-height:30px;transform:translateX(-100%)">Full Client</div><div class="a" style="left:506px;top:933px;width:24px;height:24px;border-radius:5px;background:#7b63b0"></div><svg class="a" style="left:506px;top:933px;" width="24" height="24" viewBox="0 0 24 24"><path d="M4.3 12.1 L9 16.6 L19.6 6" fill="none" stroke="#fff" stroke-width="1.3"/></svg><div class="t" style="left:564.0px;top:930.24px;font-size:17.20px;line-height:30px;">System Administrator</div><div class="a" style="left:744px;top:926px;width:26px;height:37px;overflow:hidden"><div class="t" style="left:6px;top:4.81px;font-size:17px;line-height:30px">ABC@indysoft.com</div></div><div class="a" style="left:3px;top:1000px;width:40px;height:1px;background:#e4e4e4"></div><svg class="a" style="left:57.5px;top:976px;" width="11" height="15" viewBox="0 0 11 15"><path d="M2.1 1.8 L7.7 7.55 L2.1 13.3" fill="none" stroke="#2b2b2b" stroke-width="1.5"/></svg><div class="t" style="left:86.0px;top:967.81px;font-size:17.00px;line-height:30px;transform:scaleX(0.955);transform-origin:0 0">TEST</div><svg class="a" style="left:319px;top:970px;" width="24" height="26" viewBox="0 0 24 26"><ellipse cx="11" cy="6.6" rx="6" ry="6.7" fill="#181818"/><path d="M0.2 23.8 V19.5 Q0.2 15 4.2 13.9 Q11 19.5 17.7 13.9 Q21.7 15 21.7 19.5 V23.8 Z" fill="#6b8aee"/></svg><div class="t" style="left:472.5px;top:967.81px;font-size:17.00px;line-height:30px;transform:translateX(-100%)">Full Client</div><div class="a" style="left:506px;top:970px;width:24px;height:24px;border-radius:5px;background:#7b63b0"></div><svg class="a" style="left:506px;top:970px;" width="24" height="24" viewBox="0 0 24 24"><path d="M4.3 12.1 L9 16.6 L19.6 6" fill="none" stroke="#fff" stroke-width="1.3"/></svg><div class="t" style="left:564.0px;top:967.24px;font-size:17.20px;line-height:30px;">No Access</div><div class="a" style="left:744px;top:963px;width:26px;height:37px;overflow:hidden"><div class="t" style="left:6px;top:4.81px;font-size:17px;line-height:30px">abc@indysoft.com</div></div><div class="a" style="left:43px;top:1001px;width:727px;height:36px;background:#f3f3f3"></div><div class="a" style="left:311px;top:1001px;width:1px;height:36px;background:#fff"></div><div class="a" style="left:478px;top:1001px;width:1px;height:36px;background:#fff"></div><div class="a" style="left:558px;top:1001px;width:1px;height:36px;background:#fff"></div><div class="a" style="left:744px;top:1001px;width:1px;height:36px;background:#fff"></div><div class="a" style="left:3px;top:1037px;width:40px;height:1px;background:#e4e4e4"></div><svg class="a" style="left:57.5px;top:1013px;" width="11" height="15" viewBox="0 0 11 15"><path d="M2.1 1.8 L7.7 7.55 L2.1 13.3" fill="none" stroke="#2b2b2b" stroke-width="1.5"/></svg><div class="t" style="left:86.0px;top:1004.81px;font-size:17.00px;line-height:30px;transform:scaleX(0.955);transform-origin:0 0">TESTUSER</div><svg class="a" style="left:319px;top:1007px;" width="24" height="26" viewBox="0 0 24 26"><ellipse cx="11" cy="6.6" rx="6" ry="6.7" fill="#181818"/><path d="M0.2 23.8 V19.5 Q0.2 15 4.2 13.9 Q11 19.5 17.7 13.9 Q21.7 15 21.7 19.5 V23.8 Z" fill="#6b8aee"/></svg><div class="t" style="left:472.5px;top:1004.81px;font-size:17.00px;line-height:30px;transform:translateX(-100%)">Full Client</div><div class="a" style="left:506px;top:1007px;width:24px;height:24px;border-radius:5px;background:#7b63b0"></div><svg class="a" style="left:506px;top:1007px;" width="24" height="24" viewBox="0 0 24 24"><path d="M4.3 12.1 L9 16.6 L19.6 6" fill="none" stroke="#fff" stroke-width="1.3"/></svg><div class="t" style="left:564.0px;top:1004.24px;font-size:17.20px;line-height:30px;">No Access</div><div class="a" style="left:744px;top:1000px;width:26px;height:37px;overflow:hidden"><div class="t" style="left:6px;top:4.81px;font-size:17px;line-height:30px">abc@indysoft.com</div></div><div class="a" style="left:43px;top:139px;width:1px;height:898px;background:#e4e4e4"></div><svg class="a" style="left:18.7px;top:197.6px;" width="12" height="17" viewBox="0 0 12 17"><path d="M2.1 1.7 L9.4 7.95 L2.1 14.2 Z" fill="none" stroke="#7a7a7a" stroke-width="1.5" stroke-linejoin="round"/></svg><div class="a" style="left:81px;top:187px;width:689px;height:2px;background:conic-gradient(#2a2a2a 25%,transparent 0 50%,#2a2a2a 0 75%,transparent 0) 0 0/2px 2px"></div><div class="a" style="left:81px;top:221px;width:689px;height:2px;background:conic-gradient(#2a2a2a 25%,transparent 0 50%,#2a2a2a 0 75%,transparent 0) 0 0/2px 2px"></div><div class="a" style="left:81px;top:187px;width:2px;height:36px;background:conic-gradient(#2a2a2a 25%,transparent 0 50%,#2a2a2a 0 75%,transparent 0) 0 0/2px 2px"></div><div class="a" style="left:782px;top:139px;width:688px;height:360px;background:#fdfdfd;overflow:hidden"></div><div class="a" style="left:782px;top:139px;width:688px;height:47px;background:#fcfcfc"></div><div class="a" style="left:782px;top:186px;width:688px;height:1px;background:#e2e2e2"></div><div class="a" style="left:822px;top:139px;width:1px;height:360px;background:#e6e6e6"></div><svg class="a" style="left:792.3px;top:152.6px;" width="20" height="20" viewBox="0 0 20 20"><g stroke="#f7931a" stroke-width="1.7"><line x1="16.30" y1="10.00" x2="19.30" y2="10.00"/><line x1="14.45" y1="14.45" x2="16.58" y2="16.58"/><line x1="10.00" y1="16.30" x2="10.00" y2="19.30"/><line x1="5.55" y1="14.45" x2="3.42" y2="16.58"/><line x1="3.70" y1="10.00" x2="0.70" y2="10.00"/><line x1="5.55" y1="5.55" x2="3.42" y2="3.42"/><line x1="10.00" y1="3.70" x2="10.00" y2="0.70"/><line x1="14.45" y1="5.55" x2="16.58" y2="3.42"/></g><circle cx="10" cy="10" r="3.4" fill="none" stroke="#f7931a" stroke-width="1.8"/></svg><div class="t" style="left:834.0px;top:148.11px;font-size:17.00px;line-height:30px;">Description</div><div class="a" style="left:0;top:0;width:1475px;height:499px;clip-path:inset(0 0 0 0)"><div class="a" style="left:823px;top:186px;width:647px;height:36px;background:#e5e5e5"></div><div class="a" style="left:782px;top:222px;width:40px;height:1px;background:#e4e4e4"></div><div class="a" style="left:823px;top:222px;width:647px;height:1px;background:#f2f2f2"></div><svg class="a" style="left:836.7px;top:198px;" width="11" height="15" viewBox="0 0 11 15"><path d="M2.1 1.8 L7.7 7.55 L2.1 13.3" fill="none" stroke="#2b2b2b" stroke-width="1.5"/></svg><div class="t" style="left:866.5px;top:190.64px;font-size:16.90px;line-height:30px;">Category : Action Request System</div><div class="a" style="left:782px;top:258px;width:40px;height:1px;background:#e4e4e4"></div><div class="a" style="left:823px;top:258px;width:647px;height:1px;background:#f2f2f2"></div><svg class="a" style="left:836.7px;top:234px;" width="11" height="15" viewBox="0 0 11 15"><path d="M2.1 1.8 L7.7 7.55 L2.1 13.3" fill="none" stroke="#2b2b2b" stroke-width="1.5"/></svg><div class="t" style="left:866.5px;top:226.64px;font-size:16.90px;line-height:30px;">Category : Adding Equipment Information</div><div class="a" style="left:782px;top:294px;width:40px;height:1px;background:#e4e4e4"></div><div class="a" style="left:823px;top:294px;width:647px;height:1px;background:#f2f2f2"></div><svg class="a" style="left:836.7px;top:270px;" width="11" height="15" viewBox="0 0 11 15"><path d="M2.1 1.8 L7.7 7.55 L2.1 13.3" fill="none" stroke="#2b2b2b" stroke-width="1.5"/></svg><div class="t" style="left:866.5px;top:262.64px;font-size:16.90px;line-height:30px;">Category : Adding Studies</div><div class="a" style="left:782px;top:330px;width:40px;height:1px;background:#e4e4e4"></div><div class="a" style="left:823px;top:330px;width:647px;height:1px;background:#f2f2f2"></div><svg class="a" style="left:836.7px;top:306px;" width="11" height="15" viewBox="0 0 11 15"><path d="M2.1 1.8 L7.7 7.55 L2.1 13.3" fill="none" stroke="#2b2b2b" stroke-width="1.5"/></svg><div class="t" style="left:866.5px;top:298.64px;font-size:16.90px;line-height:30px;">Category : Adding Task Information</div><div class="a" style="left:782px;top:366px;width:40px;height:1px;background:#e4e4e4"></div><div class="a" style="left:823px;top:366px;width:647px;height:1px;background:#f2f2f2"></div><svg class="a" style="left:836.7px;top:342px;" width="11" height="15" viewBox="0 0 11 15"><path d="M2.1 1.8 L7.7 7.55 L2.1 13.3" fill="none" stroke="#2b2b2b" stroke-width="1.5"/></svg><div class="t" style="left:866.5px;top:334.64px;font-size:16.90px;line-height:30px;">Category : Adding Template Information</div><div class="a" style="left:782px;top:402px;width:40px;height:1px;background:#e4e4e4"></div><div class="a" style="left:823px;top:402px;width:647px;height:1px;background:#f2f2f2"></div><svg class="a" style="left:836.7px;top:378px;" width="11" height="15" viewBox="0 0 11 15"><path d="M2.1 1.8 L7.7 7.55 L2.1 13.3" fill="none" stroke="#2b2b2b" stroke-width="1.5"/></svg><div class="t" style="left:866.5px;top:370.64px;font-size:16.90px;line-height:30px;">Category : Blocking Access To Equipment Information</div><div class="a" style="left:782px;top:438px;width:40px;height:1px;background:#e4e4e4"></div><div class="a" style="left:823px;top:438px;width:647px;height:1px;background:#f2f2f2"></div><svg class="a" style="left:836.7px;top:414px;" width="11" height="15" viewBox="0 0 11 15"><path d="M2.1 1.8 L7.7 7.55 L2.1 13.3" fill="none" stroke="#2b2b2b" stroke-width="1.5"/></svg><div class="t" style="left:866.5px;top:406.64px;font-size:16.90px;line-height:30px;">Category : Blocking Access To Studies</div><div class="a" style="left:782px;top:474px;width:40px;height:1px;background:#e4e4e4"></div><div class="a" style="left:823px;top:474px;width:647px;height:1px;background:#f2f2f2"></div><svg class="a" style="left:836.7px;top:450px;" width="11" height="15" viewBox="0 0 11 15"><path d="M2.1 1.8 L7.7 7.55 L2.1 13.3" fill="none" stroke="#2b2b2b" stroke-width="1.5"/></svg><div class="t" style="left:866.5px;top:442.64px;font-size:16.90px;line-height:30px;">Category : Blocking Access To Task Information</div><svg class="a" style="left:836.7px;top:486px;" width="11" height="15" viewBox="0 0 11 15"><path d="M2.1 1.8 L7.7 7.55 L2.1 13.3" fill="none" stroke="#2b2b2b" stroke-width="1.5"/></svg><div class="t" style="left:866.5px;top:478.64px;font-size:16.90px;line-height:30px;">Category : Blocking Access To Template Information</div></div><svg class="a" style="left:797.5px;top:196.5px;" width="12" height="17" viewBox="0 0 12 17"><path d="M2.1 1.7 L9.4 7.95 L2.1 14.2 Z" fill="none" stroke="#7a7a7a" stroke-width="1.5" stroke-linejoin="round"/></svg><div class="a" style="left:782px;top:499px;width:688px;height:12px;background:#f0f0f0"></div><div class="a" style="left:1118.4px;top:500.4px;width:3px;height:3px;border-radius:50%;background:#8f8f8f"></div><div class="a" style="left:1118.4px;top:506.4px;width:3px;height:3px;border-radius:50%;background:#8f8f8f"></div><div class="a" style="left:1124.4px;top:500.4px;width:3px;height:3px;border-radius:50%;background:#8f8f8f"></div><div class="a" style="left:1124.4px;top:506.4px;width:3px;height:3px;border-radius:50%;background:#8f8f8f"></div><div class="a" style="left:1130.4px;top:500.4px;width:3px;height:3px;border-radius:50%;background:#8f8f8f"></div><div class="a" style="left:1130.4px;top:506.4px;width:3px;height:3px;border-radius:50%;background:#8f8f8f"></div><div class="a" style="left:782px;top:511px;width:688px;height:39px;background:#fff"></div><div class="t" style="left:816.4px;top:517.28px;font-size:16.50px;line-height:30px;font-weight:bold">Profiles</div><div class="t" style="left:902.3px;top:518.75px;font-size:16.60px;line-height:30px;">Companies</div><div class="t" style="left:1013.3px;top:518.75px;font-size:16.60px;line-height:30px;">Company Filters</div><div class="a" style="left:797px;top:547px;width:98px;height:3.5px;background:#2fb5e0"></div><div class="t" style="left:794.4px;top:561.98px;font-size:16.50px;line-height:30px;font-weight:bold">Profiles</div><div class="a" style="left:771.5px;top:576.5px;width:3px;height:3px;border-radius:50%;background:#8f8f8f"></div><div class="a" style="left:777.5px;top:576.5px;width:3px;height:3px;border-radius:50%;background:#8f8f8f"></div><div class="a" style="left:771.5px;top:582.5px;width:3px;height:3px;border-radius:50%;background:#8f8f8f"></div><div class="a" style="left:777.5px;top:582.5px;width:3px;height:3px;border-radius:50%;background:#8f8f8f"></div><div class="a" style="left:771.5px;top:588.5px;width:3px;height:3px;border-radius:50%;background:#8f8f8f"></div><div class="a" style="left:777.5px;top:588.5px;width:3px;height:3px;border-radius:50%;background:#8f8f8f"></div><svg class="a" style="left:1185px;top:561px;" width="22" height="22" viewBox="0 0 22 22"><circle cx="11" cy="11" r="9.3" fill="none" stroke="#4b3f5f" stroke-width="1.8"/><path d="M11 6 V16 M6 11 H16" stroke="#4b3f5f" stroke-width="1.8"/></svg><svg class="a" style="left:1223px;top:561px;" width="21" height="22" viewBox="0 0 21 22"><path d="M1 4.9 H19" stroke="#4b3f5f" stroke-width="1.8"/><path d="M6.2 4.9 Q6.2 2.2 10 2.2 Q13.8 2.2 13.8 4.9" fill="none" stroke="#4b3f5f" stroke-width="1.8"/><path d="M3.8 5 V17.6 Q3.8 20.3 6.5 20.3 H13.5 Q16.2 20.3 16.2 17.6 V5" fill="none" stroke="#4b3f5f" stroke-width="1.8"/><path d="M8.1 8.2 V16.5 M12 8.2 V16.5" stroke="#4b3f5f" stroke-width="1.8"/></svg><div class="a" style="left:1258.5px;top:563px;width:1.5px;height:18px;background:#9a9a9a"></div><svg class="a" style="left:1275px;top:559px;" width="23" height="26" viewBox="0 0 23 26"><rect x="1.3" y="1.9" width="19.5" height="22.4" fill="none" stroke="#4e545a" stroke-width="1.4"/><ellipse cx="11" cy="10.5" rx="2.7" ry="3.3" fill="#4b3f5f"/><path d="M5 18.5 Q5 15.5 8.5 14.8 L11 16.2 L13.5 14.8 Q17 15.5 17 18.5 Z" fill="#4b3f5f"/></svg><svg class="a" style="left:1310px;top:559px;" width="27" height="26" viewBox="0 0 27 26"><g fill="none" stroke="#4b3f5f" stroke-width="1.4"><circle cx="10.9" cy="10.4" r="9.2"/><ellipse cx="10.9" cy="10.4" rx="3.8" ry="9.2"/><path d="M1.7 10.4 H20.1 M3.2 5.5 H18.6 M3.2 15.3 H18.6 M10.9 1.2 V19.6"/></g><rect x="7.5" y="12" width="18.5" height="13.7" fill="#f0f0f0"/><rect x="9.2" y="13.7" width="15.2" height="10.4" fill="none" stroke="#50565c" stroke-width="1.5"/><text x="16.8" y="22.6" font-family="Liberation Sans" font-size="10" font-weight="bold" text-anchor="middle" fill="#5a6066">ab</text></svg><svg class="a" style="left:1348px;top:560px;" width="27" height="25" viewBox="0 0 27 25"><rect x="1" y="1" width="6" height="4" fill="#4b3f5f"/><rect x="9" y="1" width="6" height="4" fill="#4b3f5f"/><rect x="17" y="1" width="6" height="4" fill="#a0a0a0"/><rect x="1" y="7" width="6" height="4" fill="#4b3f5f"/><rect x="9" y="7" width="6" height="4" fill="#4b3f5f"/><rect x="17" y="7" width="6" height="4" fill="#a0a0a0"/><rect x="1" y="13" width="6" height="4" fill="#a0a0a0"/><rect x="9" y="13" width="4" height="4" fill="#a0a0a0"/><path d="M12 12 H26 L21 18 V24 H17 V18 Z" fill="#4b3f5f"/></svg><div class="a" style="left:1386.5px;top:563px;width:1.5px;height:18px;background:#9a9a9a"></div><svg class="a" style="left:1400px;top:559px;" width="26" height="26" viewBox="0 0 26 26"><path d="M9.7 10.4 H6.3 Q3.5 10.4 3.5 13.2 V20.8 Q3.5 23.6 6.3 23.6 H19.8 Q22.6 23.6 22.6 20.8 V13.2 Q22.6 10.4 19.8 10.4 H16.1" fill="none" stroke="#4b3f5f" stroke-width="1.9"/><path d="M13 15.8 V2 M9 5.6 L13 1.6 L17 5.6" fill="none" stroke="#4b3f5f" stroke-width="1.9"/></svg><svg class="a" style="left:1437px;top:559px;" width="28" height="26" viewBox="0 0 28 26"><path d="M9.9 8.6 H6.1 Q3.1 8.6 3.1 11.6 V20.6 Q3.1 23.6 6.1 23.6 H21.7 Q24.7 23.6 24.7 20.6 V11.6 Q24.7 8.6 21.7 8.6 H18" fill="none" stroke="#4b3f5f" stroke-width="1.9"/><path d="M14 1.5 V17 M9.5 13.3 L14 17.8 L18.5 13.3" fill="none" stroke="#4b3f5f" stroke-width="1.9"/></svg><div class="a" style="left:782px;top:593px;width:688px;height:477px;background:#fff"></div><div class="a" style="left:783px;top:593px;width:549px;height:47px;background:#fcfcfc;border-right:1px solid #e2e2e2"></div><div class="a" style="left:783px;top:640px;width:549px;height:1px;background:#e2e2e2"></div><div class="a" style="left:1135px;top:593px;width:1px;height:47px;background:#e4e4e4"></div><div class="t" style="left:794.7px;top:601.71px;font-size:17.00px;line-height:30px;">Profile</div><div class="t" style="left:1147.5px;top:601.64px;font-size:17.20px;line-height:30px;">Local Administrator</div><div class="a" style="left:783px;top:641px;width:549px;height:36px;background:#f3f3f3"></div><div class="a" style="left:1135px;top:641px;width:1.5px;height:36px;background:#fff"></div><div class="t" style="left:788.0px;top:645.11px;font-size:17.00px;line-height:30px;">Auditor</div><div class="a" style="left:1222.5px;top:647.5px;width:23.5px;height:23.5px;border-radius:4px;background:#fff;border:1.2px solid #c9c9c9"></div><div class="t" style="left:788.0px;top:682.11px;font-size:17.00px;line-height:30px;">No Access</div><div class="a" style="left:1222.5px;top:684.5px;width:23.5px;height:23.5px;border-radius:4px;background:#fff;border:1.2px solid #c9c9c9"></div><div class="a" style="left:783px;top:715px;width:549px;height:36px;background:#f3f3f3"></div><div class="a" style="left:1135px;top:715px;width:1.5px;height:36px;background:#fff"></div><div class="t" style="left:788.0px;top:719.11px;font-size:17.00px;line-height:30px;">Power User</div><div class="a" style="left:1222.5px;top:721.5px;width:23.5px;height:23.5px;border-radius:4px;background:#fff;border:1.2px solid #c9c9c9"></div><div class="t" style="left:788.0px;top:756.11px;font-size:17.00px;line-height:30px;">Reports Only</div><div class="a" style="left:1222.5px;top:758.5px;width:23.5px;height:23.5px;border-radius:4px;background:#fff;border:1.2px solid #c9c9c9"></div><div class="a" style="left:783px;top:789px;width:549px;height:36px;background:#f3f3f3"></div><div class="a" style="left:1135px;top:789px;width:1.5px;height:36px;background:#fff"></div><div class="t" style="left:788.0px;top:793.11px;font-size:17.00px;line-height:30px;">Standard User</div><div class="a" style="left:1222.5px;top:795.5px;width:23.5px;height:23.5px;border-radius:4px;background:#fff;border:1.2px solid #c9c9c9"></div><div class="a" style="left:783px;top:826px;width:549px;height:36px;background:#e4e4e4"></div><div class="a" style="left:1135px;top:826px;width:1.5px;height:36px;background:#fff"></div><div class="t" style="left:788.0px;top:830.11px;font-size:17.00px;line-height:30px;">System Administrator</div><div class="a" style="left:1222.5px;top:832.5px;width:23.5px;height:23.5px;border-radius:4px;background:#fff;border:1.2px solid #c9c9c9"></div><div class="a" style="left:85px;top:89px;width:455px;height:682px;background:#fdfdfd;border:1px solid #c9c9c9;box-shadow:2px 3px 4px rgba(0,0,0,0.25)"></div><div class="a" style="left:136px;top:181px;width:402px;height:1px;background:#e3e3e3"></div><div class="a" style="left:136px;top:543px;width:402px;height:1px;background:#e3e3e3"></div><div class="a" style="left:88px;top:228px;width:449px;height:41px;background:#e6e6e6"></div><div class="t" style="left:141.0px;top:99.94px;font-size:17.50px;line-height:30px;">Equipment Searching / Reports / Layouts...</div><div class="t" style="left:141.0px;top:144.94px;font-size:17.50px;line-height:30px;">Order Searching...</div><div class="t" style="left:141.0px;top:190.94px;font-size:17.50px;line-height:30px;">Copy User Settings...</div><div class="t" style="left:141.0px;top:235.94px;font-size:17.50px;line-height:30px;">Copy Company Settings...</div><div class="t" style="left:141.0px;top:281.94px;font-size:17.50px;line-height:30px;">Log History...</div><div class="t" style="left:141.0px;top:326.94px;font-size:17.50px;line-height:30px;">Password / Keycloak Settings...</div><div class="t" style="left:141.0px;top:371.94px;font-size:17.50px;line-height:30px;">Numbering And Certificate Settings...</div><div class="t" style="left:141.0px;top:416.94px;font-size:17.50px;line-height:30px;">Cloud Options...</div><div class="t" style="left:141.0px;top:461.94px;font-size:17.50px;line-height:30px;">Login Custom Rules...</div><div class="t" style="left:141.0px;top:506.94px;font-size:17.50px;line-height:30px;">Setup Sign-Off Captions...</div><div class="t" style="left:141.0px;top:552.94px;font-size:17.50px;line-height:30px;">Setup Full Client Global Preferences...</div><div class="t" style="left:141.0px;top:597.94px;font-size:17.50px;line-height:30px;">Setup Read-Only Client Global Preferences...</div><div class="t" style="left:141.0px;top:642.94px;font-size:17.50px;line-height:30px;">Setup Pro Client Global Preferences...</div><div class="t" style="left:141.0px;top:687.94px;font-size:17.50px;line-height:30px;">Setup Vendor Location Preferences...</div><div class="t" style="left:141.0px;top:732.94px;font-size:17.50px;line-height:30px;">Compare Preferences...</div><div class="a" style="left:89px;top:224px;width:453px;height:57px;border:8px solid #7f63e9;border-radius:7px 7px 7px 7px;filter:drop-shadow(1px 2px 2.5px rgba(0,0,0,0.35))"></div><svg class="a" style="left:0;top:0;filter:drop-shadow(1px 2px 2.5px rgba(0,0,0,0.35))" width="1475" height="1104" viewBox="0 0 1475 1104"><path d="M472.3 290.1 L508.6 300.3 L500.2 310 L779.8 568.6 L778.6 570.6 L494 317 L485.7 325.3 Z" fill="#7f63e9"/></svg><svg class="a" style="left:420px;top:241px;" width="22" height="31" viewBox="0 0 22 31"><path d="M2.7 2.8 V25.4 L7.6 20.9 L10.9 28.1 L15 26.8 L12.4 20.3 H19.5 Z" fill="#fff" stroke="#000" stroke-width="1.4" stroke-linejoin="miter"/></svg></body></html>
